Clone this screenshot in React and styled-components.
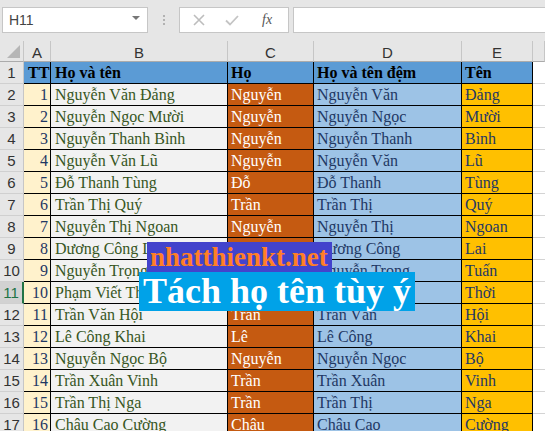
import React from "react";
import styled, { createGlobalStyle } from "styled-components";

const Global = createGlobalStyle`
  html, body { margin: 0; padding: 0; background: #fff; }
  body { overflow: hidden; }
  * { box-sizing: border-box; }
`;

const Page = styled.div`
  position: relative;
  width: 545px;
  height: 431px;
  overflow: hidden;
  display: flex;
  flex-direction: column;
  background: #fff;
`;

const FormulaBar = styled.div`
  height: 41px;
  flex: none;
  background: #e6e6e6;
  display: flex;
  align-items: flex-start;
  padding: 7px 0 0 2px;
`;

const NameBox = styled.div`
  width: 146px;
  height: 26px;
  background: #fff;
  border: 1px solid #c6c6c6;
  display: flex;
  align-items: center;
  justify-content: space-between;
  padding: 0 7px 0 6px;
  font-family: "Liberation Sans", Arial, sans-serif;
  font-size: 14px;
  color: #444;
`;

const DropArrow = styled.span`
  width: 0;
  height: 0;
  border-left: 4px solid transparent;
  border-right: 4px solid transparent;
  border-top: 4px solid #777;
  margin-top: -4px;
`;

const Grip = styled.div`
  width: 31px;
  height: 26px;
  display: flex;
  flex-direction: column;
  align-items: center;
  justify-content: center;
  gap: 2px;
  & > span {
    width: 2px;
    height: 2px;
    background: #b2b2b2;
  }
`;

const FxBox = styled.div`
  width: 110px;
  height: 26px;
  background: #fff;
  border: 1px solid #c6c6c6;
  display: flex;
  align-items: center;
  padding-left: 12px;
  gap: 18px;
`;

const FxText = styled.span`
  font-family: "Liberation Serif", "Times New Roman", serif;
  font-style: italic;
  font-size: 14px;
  color: #555;
  margin-left: 4px;
`;

const FormulaInput = styled.div`
  flex: 1;
  height: 26px;
  margin-left: 4px;
  background: #fff;
  border: 1px solid #c6c6c6;
  border-right: none;
`;

const Sheet = styled.div`
  display: grid;
  grid-template-columns: 24px 27px 177px 86px 148px 71px 1fr;
  grid-template-rows: 21px;
  grid-auto-rows: 22px;
`;

const Corner = styled.div`
  background: #e6e6e6;
  border-right: 1px solid #c6c6c6;
  border-bottom: 1px solid #ababab;
  position: relative;
  &::after {
    content: "";
    position: absolute;
    right: 3px;
    bottom: 3px;
    width: 0;
    height: 0;
    border-left: 13px solid transparent;
    border-bottom: 13px solid #b6b6b6;
  }
`;

const ColHead = styled.div`
  background: #e6e6e6;
  border-right: 1px solid #c6c6c6;
  border-bottom: 1px solid #ababab;
  display: flex;
  align-items: center;
  justify-content: center;
  font-family: "Liberation Sans", Arial, sans-serif;
  font-size: 15px;
  color: #333;
  padding-top: 2px;
`;

const RowHead = styled.div`
  background: ${(p) => (p.$sel ? "#d2d2d2" : "#e6e6e6")};
  border-right: ${(p) => (p.$sel ? "2px solid #217346" : "1px solid #c6c6c6")};
  border-bottom: 1px solid #d0d0d0;
  display: flex;
  align-items: center;
  justify-content: center;
  font-family: "Liberation Sans", Arial, sans-serif;
  font-size: 15px;
  color: ${(p) => (p.$sel ? "#217346" : "#333")};
`;

const variants = {
  head: { bg: "#5b9bd5", fg: "#000", weight: 700 },
  tt: { bg: "#fff2cc", fg: "#1f3864", weight: 400 },
  name: { bg: "#f2f2f2", fg: "#375623", weight: 400 },
  ho: { bg: "#c55a11", fg: "#ffffff", weight: 400 },
  dem: { bg: "#9dc3e6", fg: "#1f3864", weight: 400 },
  ten: { bg: "#ffc000", fg: "#1f3864", weight: 400 },
};

const Cell = styled.div`
  background: ${(p) => variants[p.$v].bg};
  color: ${(p) => variants[p.$v].fg};
  font-weight: ${(p) => variants[p.$v].weight};
  border-right: 1px solid #000;
  border-bottom: 1px solid #000;
  display: flex;
  align-items: center;
  justify-content: ${(p) => (p.$right ? "flex-end" : "flex-start")};
  padding: 1px ${(p) => (p.$right ? "2px" : "0")} 0 ${(p) => (p.$pad ?? 3)}px;
  font-family: "Liberation Serif", "Times New Roman", serif;
  font-size: 16px;
  white-space: nowrap;
  overflow: hidden;
`;

const Empty = styled.div`
  background: #fff;
  border-bottom: 1px solid #d4d4d4;
`;

const Brand = styled.div`
  position: absolute;
  left: 147px;
  top: 242px;
  width: 185px;
  height: 32px;
  background: #4343cc;
  color: #ff7f27;
  font-family: "Liberation Serif", "Times New Roman", serif;
  font-weight: 700;
  font-size: 27px;
  line-height: 30px;
  padding-left: 3px;
`;

const Title = styled.div`
  position: absolute;
  left: 139px;
  top: 272px;
  width: 276px;
  height: 39px;
  background: #00a2e8;
  color: #fff;
  font-family: "Liberation Serif", "Times New Roman", serif;
  font-weight: 700;
  font-size: 36px;
  line-height: 38px;
  text-align: center;
  white-space: nowrap;
`;

const rows = [
  ["1", "Nguyễn Văn Đảng", "Nguyễn", "Nguyễn Văn", "Đảng"],
  ["2", "Nguyễn Ngọc Mười", "Nguyễn", "Nguyễn Ngọc", "Mười"],
  ["3", "Nguyễn Thanh Bình", "Nguyễn", "Nguyễn Thanh", "Bình"],
  ["4", "Nguyễn Văn Lũ", "Nguyễn", "Nguyễn Văn", "Lũ"],
  ["5", "Đỗ Thanh Tùng", "Đỗ", "Đỗ Thanh", "Tùng"],
  ["6", "Trần Thị Quý", "Trần", "Trần Thị", "Quý"],
  ["7", "Nguyễn Thị Ngoan", "Nguyễn", "Nguyễn Thị", "Ngoan"],
  ["8", "Dương Công Lai", "Dương", "Dương Công", "Lai"],
  ["9", "Nguyễn Trọng Tuấn", "Nguyễn", "Nguyễn Trọng", "Tuấn"],
  ["10", "Phạm Viết Thời", "Phạm", "Phạm Viết", "Thời"],
  ["11", "Trần Văn Hội", "Trần", "Trần Văn", "Hội"],
  ["12", "Lê Công Khai", "Lê", "Lê Công", "Khai"],
  ["13", "Nguyễn Ngọc Bộ", "Nguyễn", "Nguyễn Ngọc", "Bộ"],
  ["14", "Trần Xuân Vinh", "Trần", "Trần Xuân", "Vinh"],
  ["15", "Trần Thị Nga", "Trần", "Trần Thị", "Nga"],
  ["16", "Châu Cao Cường", "Châu", "Châu Cao", "Cường"],
];

const XIcon = () => (
  <svg width="14" height="14" viewBox="0 0 14 14">
    <path d="M2 2 L12 12 M12 2 L2 12" stroke="#bdbdbd" strokeWidth="1.6" fill="none" />
  </svg>
);

const CheckIcon = () => (
  <svg width="16" height="14" viewBox="0 0 16 14">
    <path d="M2 7.5 L6 11.5 L14 3" stroke="#c4c4c4" strokeWidth="1.8" fill="none" />
  </svg>
);

export default function App() {
  return (
    <Page>
      <Global />
      <FormulaBar>
        <NameBox>
          <span>H11</span>
          <DropArrow />
        </NameBox>
        <Grip>
          <span />
          <span />
          <span />
        </Grip>
        <FxBox>
          <XIcon />
          <CheckIcon />
          <FxText>fx</FxText>
        </FxBox>
        <FormulaInput />
      </FormulaBar>
      <Sheet>
        <Corner />
        {["A", "B", "C", "D", "E", ""].map((c, i) => (
          <ColHead key={i}>{c}</ColHead>
        ))}
        <RowHead>1</RowHead>
        <Cell $v="head" $pad={4}>TT</Cell>
        <Cell $v="head" $pad={4}>Họ và tên</Cell>
        <Cell $v="head">Họ</Cell>
        <Cell $v="head">Họ và tên đệm</Cell>
        <Cell $v="head">Tên</Cell>
        <Empty />
        {rows.map((r, i) => (
          <React.Fragment key={i}>
            <RowHead $sel={i + 2 === 11}>{i + 2}</RowHead>
            <Cell $v="tt" $right>{r[0]}</Cell>
            <Cell $v="name" $pad={4}>{r[1]}</Cell>
            <Cell $v="ho">{r[2]}</Cell>
            <Cell $v="dem">{r[3]}</Cell>
            <Cell $v="ten">{r[4]}</Cell>
            <Empty />
          </React.Fragment>
        ))}
      </Sheet>
      <Brand>nhatthienkt.net</Brand>
      <Title>Tách họ tên tùy ý</Title>
    </Page>
  );
}
